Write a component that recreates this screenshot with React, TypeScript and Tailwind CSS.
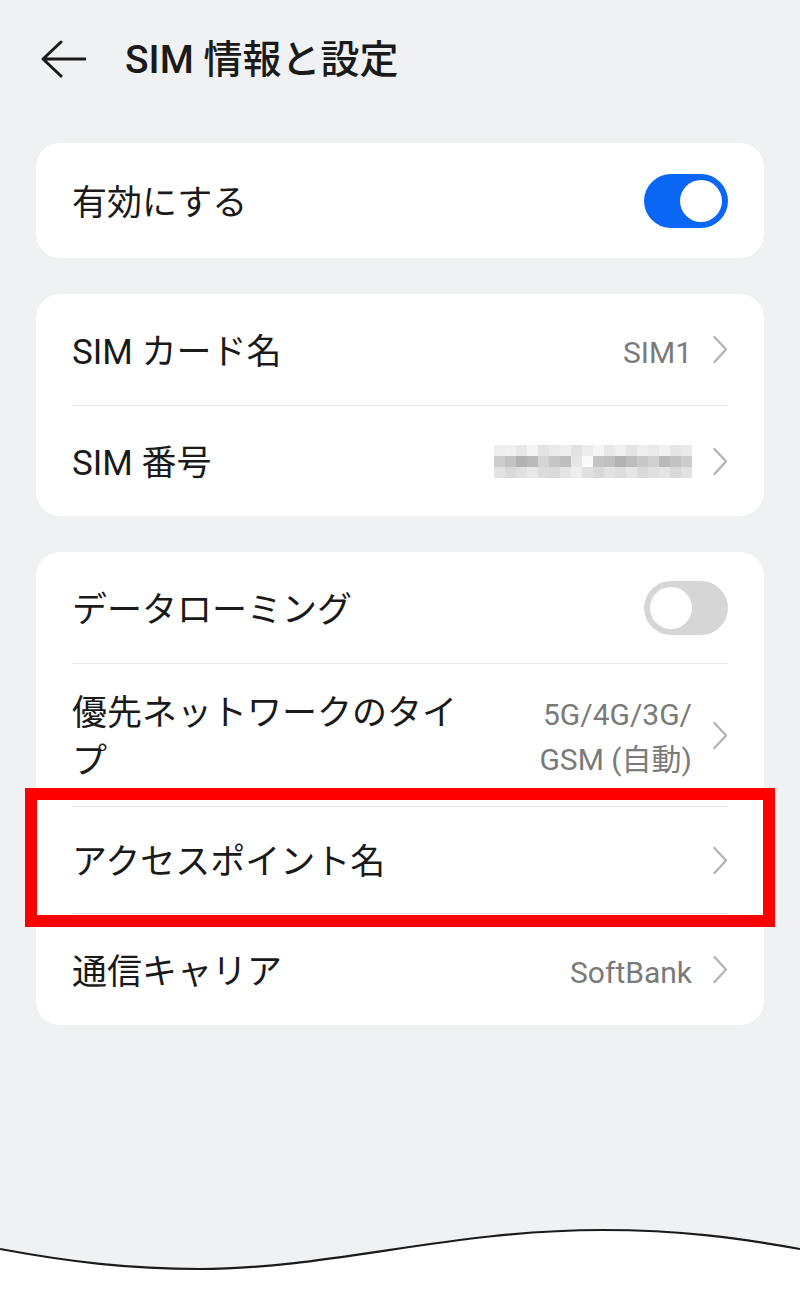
import React from "react";

const FONT = { fontFamily: '"Roboto", "Noto Sans CJK JP", sans-serif' };

function Chevron() {
  return (
    <svg width="16" height="29" viewBox="0 0 16 29" className="shrink-0">
      <path d="M2.5 2 L14 14.5 L2.5 27" fill="none" stroke="#b5b5b5" strokeWidth="2.4" strokeLinecap="round" strokeLinejoin="round" />
    </svg>
  );
}

function Toggle({ on }: { on: boolean }) {
  return (
    <div
      className={
        on
          ? "w-[84px] h-[54px] rounded-full bg-[#0a66f5] flex items-center justify-end px-[6px] shrink-0"
          : "w-[84px] h-[54px] rounded-full bg-[#d6d6d6] flex items-center justify-start px-[6px] shrink-0"
      }
    >
      <div className="w-[42px] h-[42px] rounded-full bg-white" />
    </div>
  );
}

const PIX = [
  [0xee, 0xf0, 0xe8, 0xf4, 0xe4, 0xea, 0xee, 0xe2, 0xec, 0xf6, 0xe8, 0xf0, 0xe4, 0xee, 0xea, 0xf2, 0xe6, 0xea],
  [0xcc, 0xc2, 0xb2, 0xba, 0xd4, 0xc6, 0xbe, 0xe6, 0xfa, 0xc4, 0xc0, 0xb2, 0xbc, 0xc8, 0xd0, 0xb8, 0xc2, 0xcc],
  [0xe2, 0xd8, 0xe0, 0xe8, 0xdc, 0xda, 0xe4, 0xee, 0xe0, 0xd8, 0xe2, 0xdc, 0xe6, 0xda, 0xe0, 0xe4, 0xd8, 0xe2],
];

function Pixelated() {
  return (
    <svg width="198" height="33" viewBox="0 0 198 33" className="shrink-0">
      {PIX.map((row, r) =>
        row.map((v, c) => {
          const h = v.toString(16);
          return <rect key={r + "-" + c} x={c * 11} y={r * 11} width="11" height="11" fill={"#" + h + h + h} />;
        })
      )}
    </svg>
  );
}

function Divider() {
  return <div className="mx-[36px] h-px bg-[#e6e6e6]" />;
}

function Row({ label, value, h }: { label: React.ReactNode; value?: React.ReactNode; h: string }) {
  return (
    <div className={"flex items-center justify-between px-[36px] " + h}>
      <div className="pt-[6px] text-[35px] text-[#1a1a1a] leading-[48px]">{label}</div>
      <div className="flex items-center gap-[20px]">
        {value}
        <Chevron />
      </div>
    </div>
  );
}

export default function App() {
  return (
    <div className="relative w-[800px] h-[1300px] bg-[#f0f1f3] flex flex-col overflow-hidden" style={FONT}>
      {/* Header */}
      <div className="h-[118px] flex items-center pl-[40px] shrink-0">
        <svg width="46" height="40" viewBox="0 0 46 40" className="shrink-0">
          <path d="M21 3 L3 20 L21 37 M3 20 H45" fill="none" stroke="#1a1a1a" strokeWidth="3" strokeLinecap="round" strokeLinejoin="round" />
        </svg>
        <div className="ml-[39px] pt-[3px] text-[39px] font-medium text-[#1a1a1a] leading-none">SIM 情報と設定</div>
      </div>

      <div className="mt-[25px] mx-[36px] flex flex-col gap-[36px]">
        {/* Card 1 */}
        <div className="bg-white rounded-[24px] h-[115px] flex items-center justify-between px-[36px]">
          <div className="pt-[6px] text-[35px] text-[#1a1a1a] leading-[48px]">有効にする</div>
          <Toggle on />
        </div>

        {/* Card 2 */}
        <div className="bg-white rounded-[24px]">
          <Row
            h="h-[111px]"
            label="SIM カード名"
            value={<span className="pt-[6px] text-[30px] leading-[40px] text-[#7a7a7a]">SIM1</span>}
          />
          <Divider />
          <Row h="h-[110px]" label="SIM 番号" value={<Pixelated />} />
        </div>

        {/* Card 3 */}
        <div className="relative bg-white rounded-[24px]">
          <div className="flex items-center justify-between px-[36px] h-[111px]">
            <div className="pt-[6px] text-[35px] text-[#1a1a1a] leading-[48px]">データローミング</div>
            <Toggle on={false} />
          </div>
          <Divider />
          <div className="flex items-center justify-between px-[36px] h-[142px]">
            <div className="w-[400px] pt-[5px] text-[35px] text-[#1a1a1a] leading-[48px]">優先ネットワークのタイプ</div>
            <div className="flex items-center gap-[20px]">
              <div className="pt-[3px] text-right text-[30px] text-[#7a7a7a] leading-[45px]">
                5G/4G/3G/
                <br />
                GSM (自動)
              </div>
              <Chevron />
            </div>
          </div>
          <Divider />
          <Row h="h-[106px]" label="アクセスポイント名" />
          <Divider />
          <Row
            h="h-[111px]"
            label="通信キャリア"
            value={<span className="pt-[6px] text-[30px] leading-[40px] text-[#7a7a7a]">SoftBank</span>}
          />

          {/* Highlight overlay */}
          <div className="absolute left-[-11px] top-[236px] w-[750px] h-[139px] border-[12px] border-[#ff0000] pointer-events-none" />
        </div>
      </div>

      {/* Bottom wave */}
      <svg width="800" height="80" viewBox="0 0 800 80" className="mt-auto block shrink-0">
        <path d="M0 29 C70 42 130 49 199 49 C330 49 450 10 602 10 C680 10 740 18 800 29 L800 80 L0 80 Z" fill="#ffffff" />
        <path d="M0 29 C70 42 130 49 199 49 C330 49 450 10 602 10 C680 10 740 18 800 29" fill="none" stroke="#1a1a1a" strokeWidth="2.2" />
      </svg>
    </div>
  );
}
